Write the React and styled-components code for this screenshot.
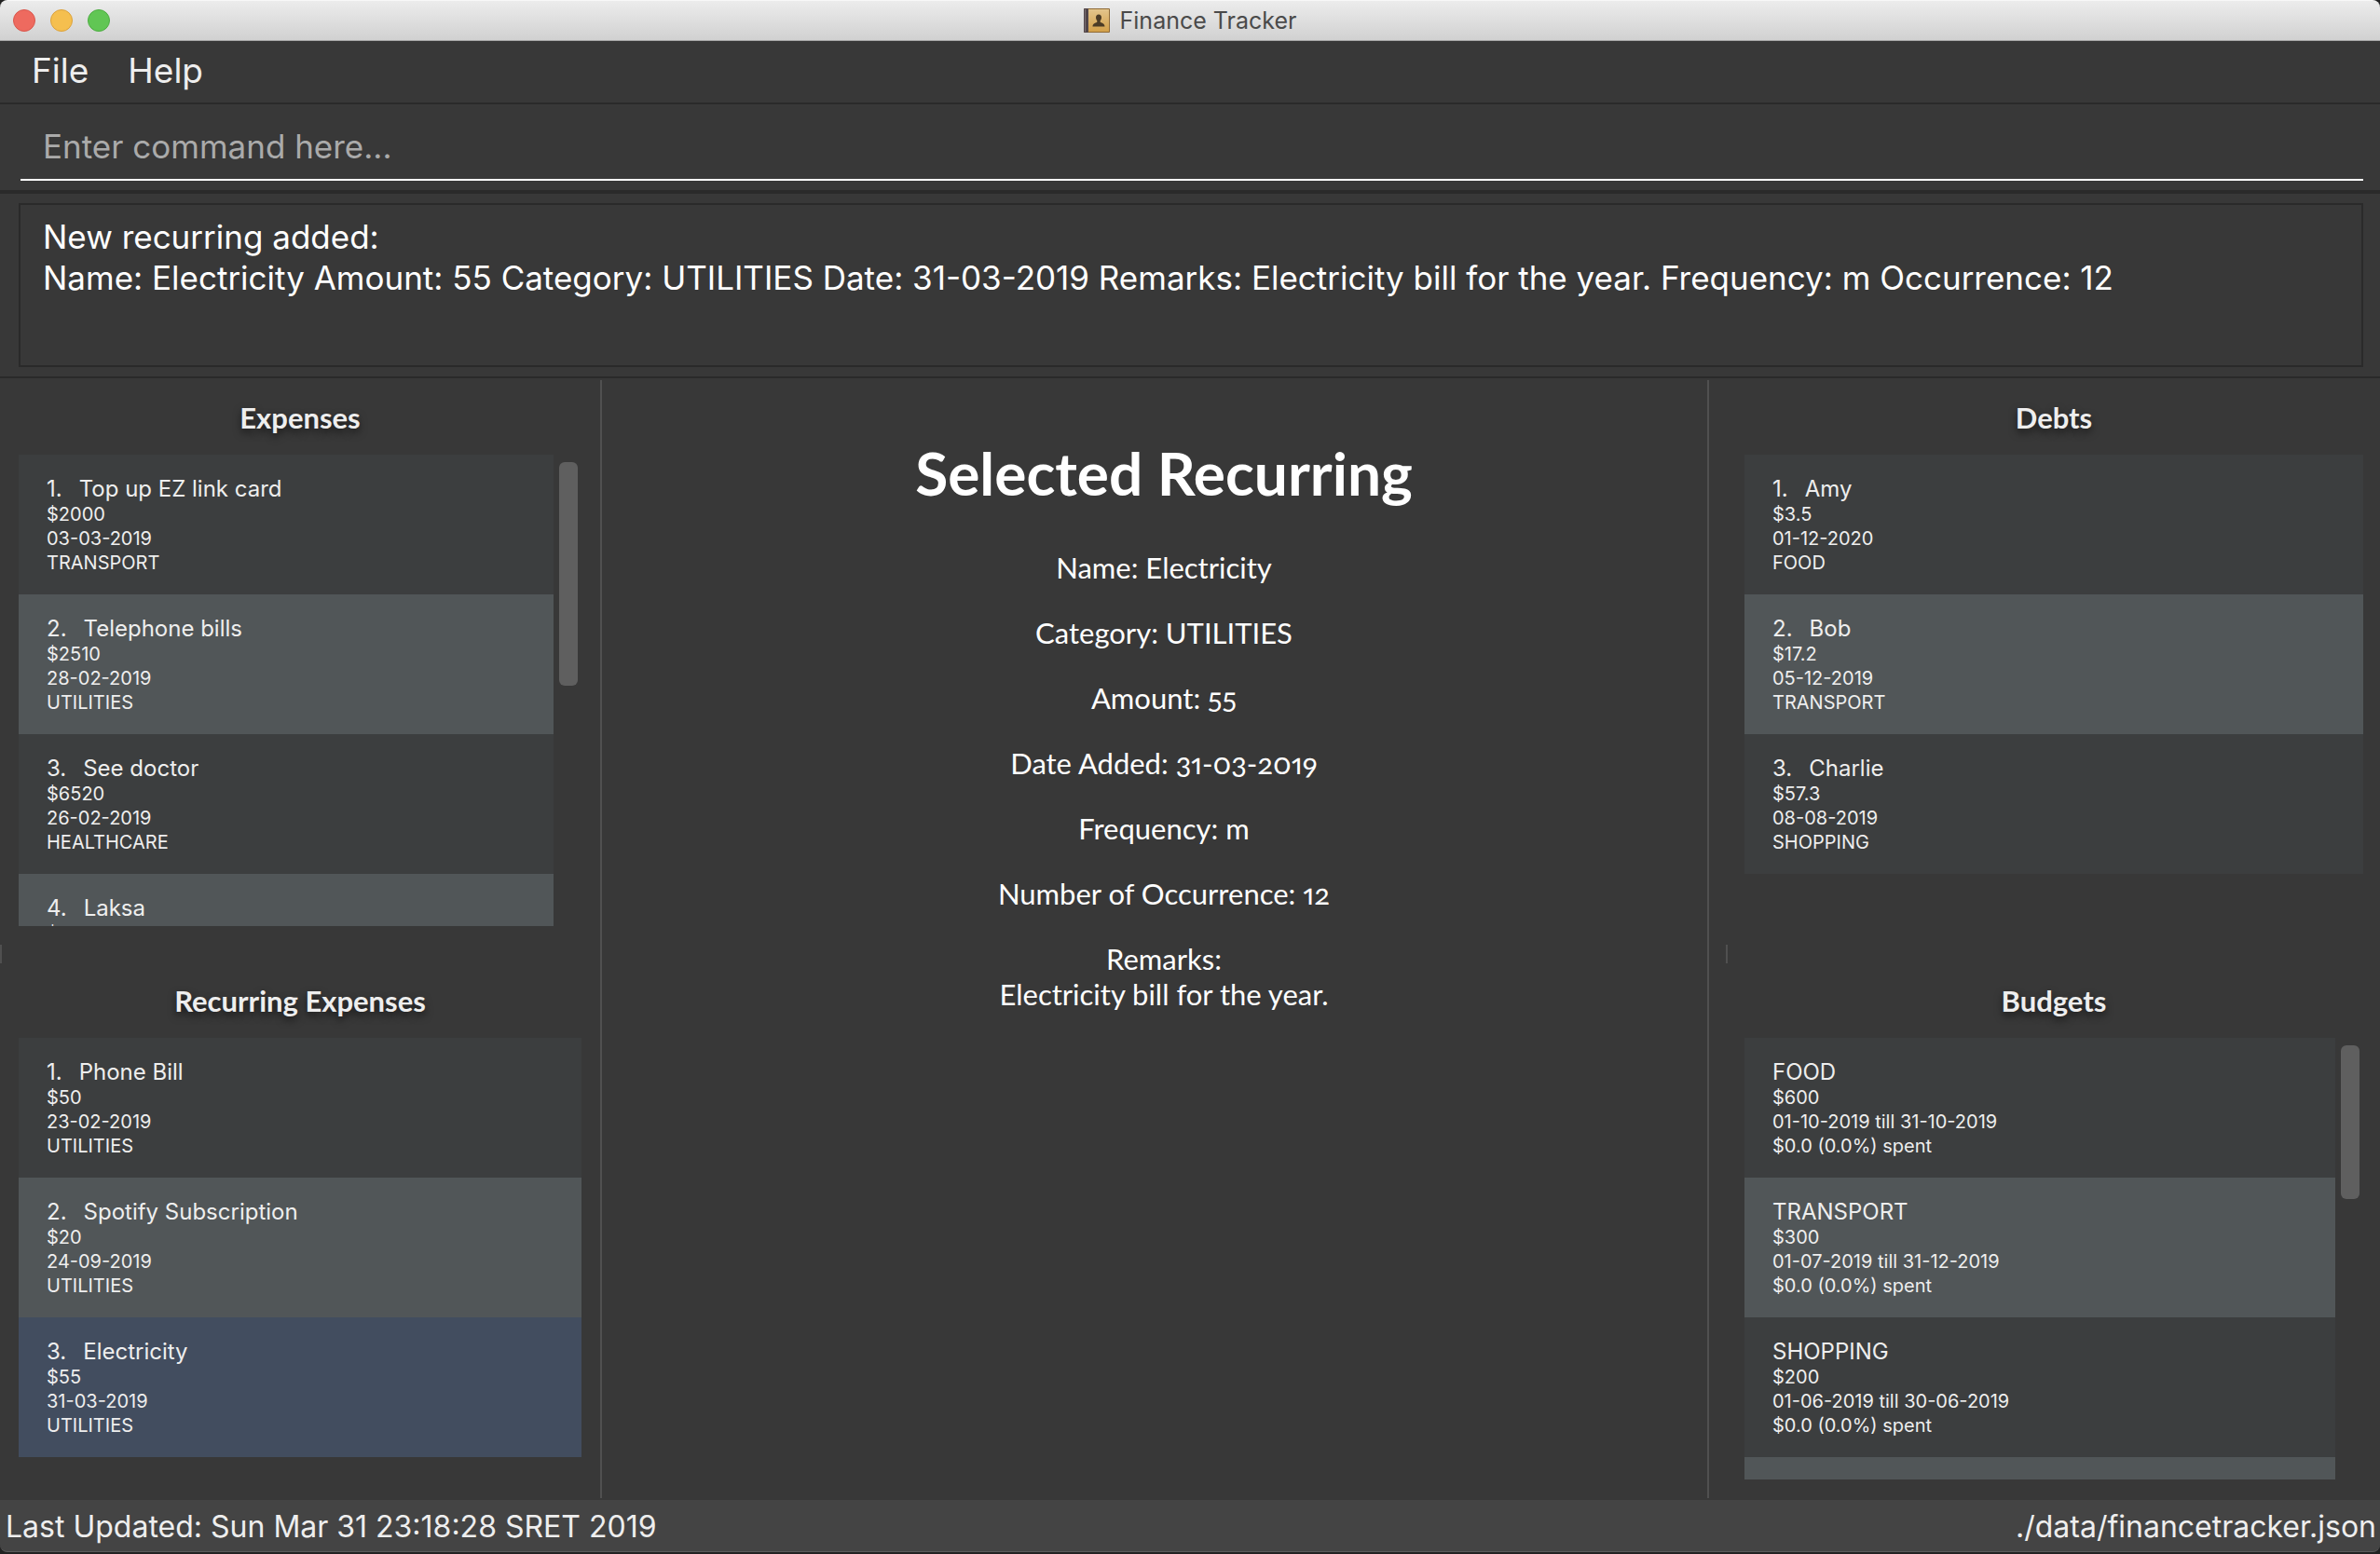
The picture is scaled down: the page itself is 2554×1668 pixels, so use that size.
import React from "react";
import styled, { createGlobalStyle } from "styled-components";

const uiFont = `Inter, Roboto, "Liberation Sans", sans-serif`;
const titleFont = `Lato, "Open Sans", "Liberation Sans", sans-serif`;

const GlobalStyle = createGlobalStyle`
  *, *::before, *::after { box-sizing: border-box; }
  body { margin: 0; background: #222222; }
  h1, h2, p, ul, ol, dl, dd { margin: 0; padding: 0; }
`;

const Window = styled.div`
  display: flex;
  flex-direction: column;
  height: 100vh;
  padding-bottom: 2px;
  overflow: hidden;
  font-family: ${uiFont};
  color: #eeeeee;
`;

const TitleBar = styled.header`
  display: grid;
  grid-template-columns: 1fr auto 1fr;
  align-items: center;
  flex: none;
  height: 44px;
  padding: 0 14px;
  border-top: 1px solid #f8f8f8;
  border-bottom: 1px solid #a8a8a8;
  border-radius: 8px 8px 0 0;
  background: linear-gradient(#ececec, #d1d1d1);
`;

const Lights = styled.div`
  display: flex;
  gap: 16px;
`;

const Light = styled.button`
  width: 24px;
  height: 24px;
  padding: 0;
  border: 1px solid ${(p) => p.$edge};
  border-radius: 50%;
  background: ${(p) => p.$fill};
`;

const WindowTitle = styled.div`
  display: flex;
  align-items: center;
  gap: 11px;
  font-size: 25px;
  line-height: 32px;
  color: #4a4a4a;
`;

const MenuBar = styled.nav`
  display: flex;
  align-items: center;
  gap: 42px;
  flex: none;
  height: 68px;
  padding: 0 34px 2px;
  border-bottom: 2px solid #2a2a2a;
  background: #383838;
`;

const MenuButton = styled.button`
  padding: 0;
  border: 0;
  background: none;
  font: 37px/42px ${uiFont};
  color: #eeeeee;
`;

const CommandPane = styled.form`
  flex: none;
  height: 96px;
  padding: 12px 18px 10px 22px;
  border-bottom: 4px solid #2a2a2a;
  background: #383838;
`;

const CommandInput = styled.input`
  display: block;
  width: 100%;
  height: 70px;
  padding: 0 24px 2px;
  border: 0;
  border-bottom: 2px solid #ffffff;
  outline: none;
  background: transparent;
  font: 35px/44px ${uiFont};
  color: #ffffff;

  &::placeholder {
    color: #aaaaaa;
    opacity: 1;
  }
`;

const ResultPane = styled.section`
  flex: none;
  padding: 10px 18px 10px 20px;
  border-bottom: 2px solid #2a2a2a;
  background: #383838;
`;

const ResultDisplay = styled.textarea`
  display: block;
  width: 100%;
  height: 176px;
  padding: 12px 24px;
  border: 2px solid #2a2a2a;
  outline: none;
  resize: none;
  overflow: hidden;
  background: transparent;
  font: 35px/44px ${uiFont};
  color: #ffffff;
`;

const Workspace = styled.main`
  display: grid;
  grid-template-columns: 646fr 1188fr 720fr;
  flex: 1;
  min-height: 0;
  padding: 2px 0;
  background: #383838;
`;

const SideColumn = styled.div`
  display: flex;
  flex-direction: column;
  min-width: 0;
  min-height: 0;
  border-right: ${(p) => (p.$divided ? "2px solid #505050" : "0")};
`;

const Grip = styled.div`
  flex: none;
  width: 2px;
  height: 20px;
  margin-left: ${(p) => p.$inset}px;
  background: #505050;
`;

const Panel = styled.section`
  display: flex;
  flex-direction: column;
  flex: ${(p) => p.$share} 1 0;
  min-height: 0;
  padding: 0 ${(p) => p.$right}px 20px ${(p) => p.$left}px;
`;

const PanelTitle = styled.h2`
  flex: none;
  font: 700 31px/80px ${titleFont};
  text-align: center;
  text-shadow: 0 4px 8px rgba(0, 0, 0, 0.6);
`;

const PanelBody = styled.div`
  display: flex;
  flex: 1;
  min-height: 0;
`;

const CardList = styled.ul`
  flex: 1;
  min-width: 0;
  overflow: hidden;
  list-style: none;
`;

const Card = styled.li`
  padding: 23px 30px 21px;
  background: ${(p) => (p.$selected ? "#424d5f" : "#3c3e3f")};
  font-size: 20px;
  line-height: 26px;

  &:nth-child(even) {
    background: #515658;
  }
`;

const CardTitle = styled.div`
  display: flex;
  gap: 18px;
  font-size: 24px;
  line-height: 28px;
`;

const ScrollTrack = styled.div`
  flex: none;
  width: 30px;
  padding: 8px 4px 8px 6px;
`;

const ScrollThumb = styled.div`
  height: ${(p) => p.$size}%;
  border-radius: 6px;
  background: #5f5f5f;
`;

const Detail = styled.article`
  display: flex;
  flex-direction: column;
  align-items: center;
  gap: 32px;
  min-width: 0;
  padding: 60px 0 0 20px;
  border-right: 2px solid #505050;
  font: 31px/38px ${titleFont};
  font-variant-numeric: oldstyle-nums proportional-nums;
  text-align: center;
  color: #ffffff;
`;

const DetailTitle = styled.h1`
  margin-bottom: 10px;
  font-size: 64px;
  line-height: 80px;
  font-weight: 700;
`;

const StatusBar = styled.footer`
  display: flex;
  align-items: center;
  justify-content: space-between;
  flex: none;
  height: 56px;
  padding: 2px 4px 0 6px;
  border-bottom: 1px solid #5c5c5c;
  border-radius: 0 0 8px 8px;
  background: #444444;
  font-size: 32px;
  line-height: 40px;
`;

const expenses = [
  { name: "Top up EZ link card", lines: ["$2000", "03-03-2019", "TRANSPORT"] },
  { name: "Telephone bills", lines: ["$2510", "28-02-2019", "UTILITIES"] },
  { name: "See doctor", lines: ["$6520", "26-02-2019", "HEALTHCARE"] },
  { name: "Laksa", lines: ["$"] },
];

const recurring = [
  { name: "Phone Bill", lines: ["$50", "23-02-2019", "UTILITIES"] },
  { name: "Spotify Subscription", lines: ["$20", "24-09-2019", "UTILITIES"] },
  { name: "Electricity", lines: ["$55", "31-03-2019", "UTILITIES"], selected: true },
];

const debts = [
  { name: "Amy", lines: ["$3.5", "01-12-2020", "FOOD"] },
  { name: "Bob", lines: ["$17.2", "05-12-2019", "TRANSPORT"] },
  { name: "Charlie", lines: ["$57.3", "08-08-2019", "SHOPPING"] },
];

const budgets = [
  { name: "FOOD", lines: ["$600", "01-10-2019 till 31-10-2019", "$0.0 (0.0%) spent"] },
  { name: "TRANSPORT", lines: ["$300", "01-07-2019 till 31-12-2019", "$0.0 (0.0%) spent"] },
  { name: "SHOPPING", lines: ["$200", "01-06-2019 till 30-06-2019", "$0.0 (0.0%) spent"] },
  { name: "", lines: [] },
];

const details = [
  "Name: Electricity",
  "Category: UTILITIES",
  "Amount: 55",
  "Date Added: 31-03-2019",
  "Frequency: m",
  "Number of Occurrence: 12",
];

const resultText =
  "New recurring added:\nName: Electricity Amount: 55 Category: UTILITIES Date: 31-03-2019 Remarks: Electricity bill for the year. Frequency: m Occurrence: 12";

function AddressBookIcon() {
  return (
    <svg width="28" height="28" viewBox="0 0 28 28" aria-hidden="true">
      <defs>
        <linearGradient id="cover" x1="0" y1="0" x2="0" y2="1">
          <stop offset="0" stopColor="#e3c48c" />
          <stop offset="1" stopColor="#d3a04a" />
        </linearGradient>
      </defs>
      <rect x="0" y="1" width="28" height="26" rx="1" fill="#8f6a35" />
      <rect x="5" y="2" width="22" height="24" fill="url(#cover)" />
      <rect x="0" y="1" width="5" height="26" rx="1" fill="#51464a" />
      <rect x="1" y="2" width="1" height="24" fill="#7b7074" />
      <path
        d="M16 7.500c2 0 3 1.400 3 3.300 0 1.600-.6 2.700-1.300 3.400v1.400c.5 1.200 4.800 1.200 4.800 4.900h-13c0-3.700 4.300-3.700 4.800-4.900v-1.400c-.7-.7-1.300-1.800-1.300-3.400 0-1.900 1-3.300 3-3.300z"
        fill="#4b3b26"
      />
    </svg>
  );
}

function ListPanel({ title, items, numbered, thumb, share, left, right }) {
  return (
    <Panel $share={share} $left={left} $right={right}>
      <PanelTitle>{title}</PanelTitle>
      <PanelBody>
        <CardList aria-label={title}>
          {items.map((item, i) => (
            <Card key={i} $selected={item.selected}>
              <CardTitle>
                {numbered && <span>{i + 1}.</span>}
                <span>{item.name}</span>
              </CardTitle>
              {item.lines.map((line) => (
                <p key={line}>{line}</p>
              ))}
            </Card>
          ))}
        </CardList>
        {thumb && (
          <ScrollTrack>
            <ScrollThumb $size={thumb} />
          </ScrollTrack>
        )}
      </PanelBody>
    </Panel>
  );
}

export default function App() {
  return (
    <>
      <GlobalStyle />
      <Window>
        <TitleBar>
          <Lights>
            <Light type="button" aria-label="Close" $fill="#ee6a5f" $edge="#d9564c" />
            <Light type="button" aria-label="Minimize" $fill="#f5bf4f" $edge="#dca23b" />
            <Light type="button" aria-label="Zoom" $fill="#61c654" $edge="#4dad42" />
          </Lights>
          <WindowTitle>
            <AddressBookIcon />
            <span>Finance Tracker</span>
          </WindowTitle>
        </TitleBar>

        <MenuBar>
          <MenuButton type="button">File</MenuButton>
          <MenuButton type="button">Help</MenuButton>
        </MenuBar>

        <CommandPane onSubmit={(e) => e.preventDefault()}>
          <CommandInput type="text" aria-label="Command" placeholder="Enter command here..." />
        </CommandPane>

        <ResultPane>
          <ResultDisplay aria-label="Result" readOnly value={resultText} />
        </ResultPane>

        <Workspace>
          <SideColumn $divided>
            <ListPanel title="Expenses" items={expenses} numbered thumb={49} share={586} left={20} right={20} />
            <Grip $inset={0} />
            <ListPanel title="Recurring Expenses" items={recurring} numbered share={554} left={20} right={20} />
          </SideColumn>

          <Detail>
            <DetailTitle>Selected Recurring</DetailTitle>
            {details.map((line) => (
              <p key={line}>{line}</p>
            ))}
            <p>
              Remarks:
              <br />
              Electricity bill for the year.
            </p>
          </Detail>

          <SideColumn>
            <ListPanel title="Debts" items={debts} numbered share={586} left={38} right={18} />
            <Grip $inset={18} />
            <ListPanel title="Budgets" items={budgets} thumb={36} share={554} left={38} right={18} />
          </SideColumn>
        </Workspace>

        <StatusBar>
          <span>Last Updated: Sun Mar 31 23:18:28 SRET 2019</span>
          <span>./data/financetracker.json</span>
        </StatusBar>
      </Window>
    </>
  );
}
